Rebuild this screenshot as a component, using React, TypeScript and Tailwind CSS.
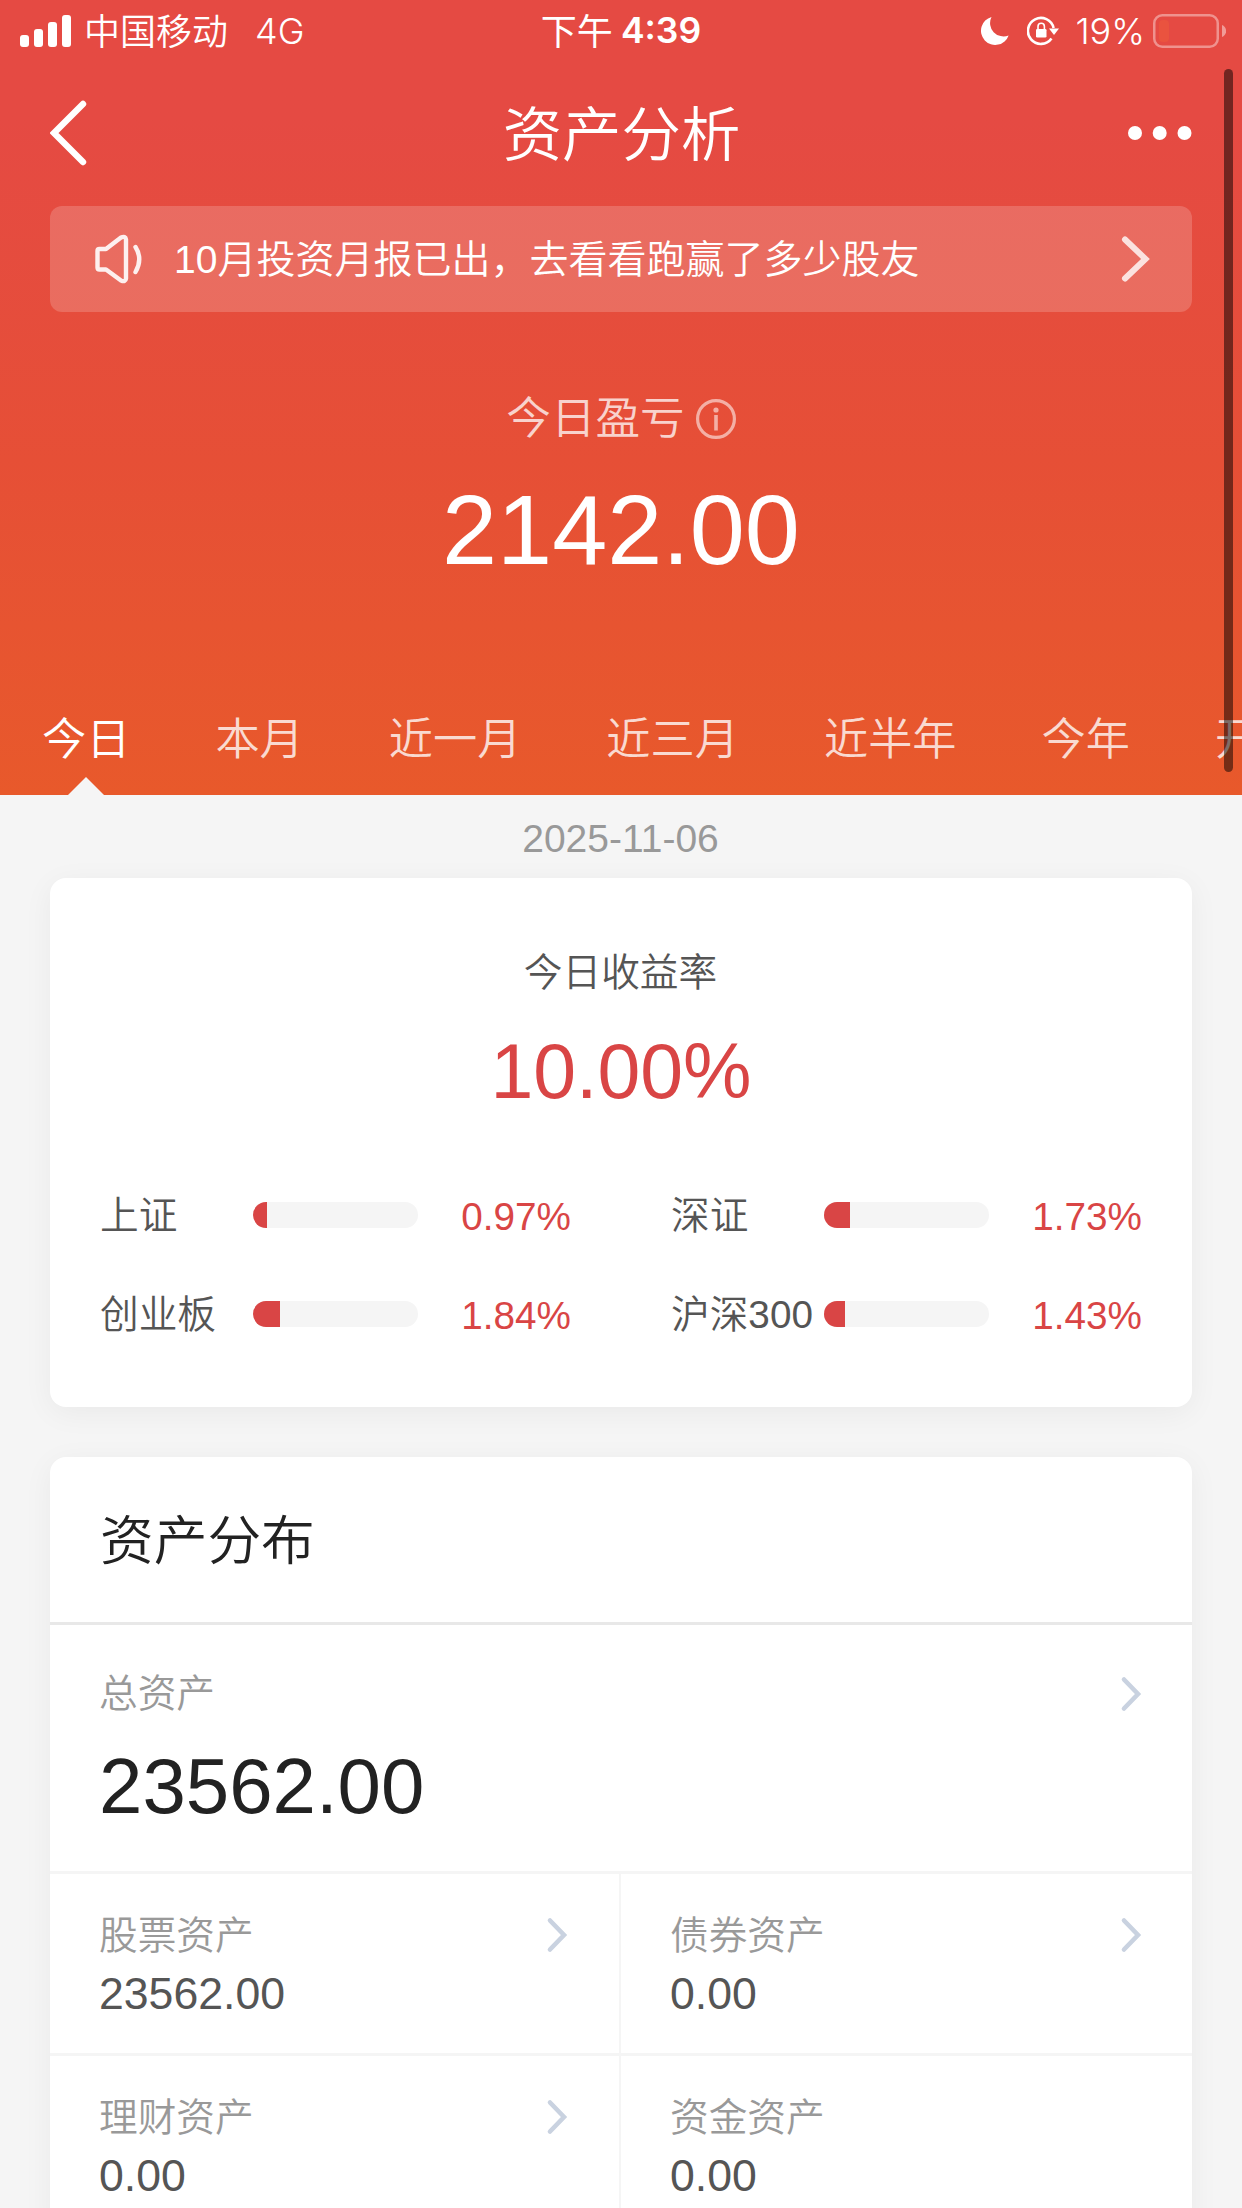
const indices = [
  { name: '上证', value: '0.97%', fill: 14 },
  { name: '深证', value: '1.73%', fill: 26 },
  { name: '创业板', value: '1.84%', fill: 27 },
  { name: '沪深300', value: '1.43%', fill: 21 },
];

const periods = ['今日', '本月', '近一月', '近三月', '近半年', '今年', '开'];

const assets = [
  { name: '股票资产', value: '23562.00', link: true },
  { name: '债券资产', value: '0.00', link: true },
  { name: '理财资产', value: '0.00', link: true },
  { name: '资金资产', value: '0.00', link: false },
];

const Chevron = ({ className }: { className: string }) => (
  <svg className={className} viewBox="0 0 22 36" fill="none" stroke="currentColor" strokeWidth="4.6" strokeLinecap="round">
    <path d="M4 3.5 L18 18 L4 32.5" />
  </svg>
);

const StatusBar = () => (
  <div className="grid h-[62px] grid-cols-3 items-center font-['Inter','Noto_Sans_CJK_SC',sans-serif] text-[36px] leading-none">
    <div className="flex items-center pl-5">
      <svg className="h-8 w-[51px]" viewBox="0 0 51 32" fill="currentColor">
        <rect x="0" y="20" width="9" height="12" rx="3" />
        <rect x="14" y="14" width="9" height="18" rx="3" />
        <rect x="28" y="7" width="9" height="25" rx="3" />
        <rect x="42" y="0" width="9" height="32" rx="3" />
      </svg>
      <span className="mt-px ml-[13px] font-[350]">中国移动</span>
      <span className="ml-[27px] font-[350]">4G</span>
    </div>
    <div className="flex items-center justify-center">
      <span className="mt-px">下午</span>
      <span className="ml-2 text-[35.5px] font-[560]">4:39</span>
    </div>
    <div className="flex items-center justify-end pr-4">
      <svg className="h-7 w-7" viewBox="0 0 28 28" fill="currentColor">
        <path d="M10.5 0 A14.2 14.2 0 1 0 27.6 18.4 A13.4 13.4 0 0 1 10.5 0 Z" />
      </svg>
      <svg className="ml-[18px] h-[30px] w-8" viewBox="0 0 32 30" fill="none" stroke="currentColor" strokeWidth="2.6">
        <path d="M26.6 12 A13 13 0 1 0 24.5 22.5" />
        <path d="M22 12.5 H32 L27 19 Z" fill="currentColor" stroke="none" />
        <rect x="9" y="13" width="10.5" height="8.5" rx="1.3" fill="currentColor" stroke="none" />
        <path d="M11 13.5 V10.5 A3.2 3.2 0 0 1 17.4 10.5 V13.5" strokeWidth="1.6" />
      </svg>
      <span className="ml-4 font-[350]">19%</span>
      <svg className="ml-2 h-[34px] w-[73px]" viewBox="0 0 73 34">
        <rect x="1.25" y="1.25" width="63.5" height="31.5" rx="8" fill="none" stroke="white" strokeOpacity=".4" strokeWidth="2.5" />
        <rect x="6" y="6" width="10" height="22" rx="4" fill="#ea533f" />
        <path d="M69 11 C74.5 13 74.5 21 69 23 Z" fill="white" fillOpacity=".45" />
      </svg>
    </div>
  </div>
);

const Header = () => (
  <header className="h-[795px] overflow-hidden bg-linear-to-b from-[#e54a43] from-15% via-[#e64f36] via-58% to-[#e8592b] text-white">
    <StatusBar />

    {/* Nav bar */}
    <div className="flex h-36 items-center justify-between px-[50px] pb-[2px]">
      <svg className="h-[66px] w-[60px]" viewBox="0 0 60 66" fill="none" stroke="currentColor" strokeWidth="6.4" strokeLinecap="round">
        <path d="M33 4 L4 33 L33 62" />
      </svg>
      <h1 className="mt-[6px] ml-[6px] text-[59.4px] leading-none font-[350]">资产分析</h1>
      <svg className="-mr-px h-4 w-[66px]" viewBox="0 0 66 16" fill="currentColor">
        <circle cx="8" cy="8" r="7" />
        <circle cx="32.7" cy="8" r="7" />
        <circle cx="57.5" cy="8" r="7" />
      </svg>
    </div>

    {/* Monthly report notice */}
    <div className="mx-[50px] flex h-[106px] items-center rounded-xl bg-white/18 pr-[42px] pl-11">
      <svg className="h-[50px] w-[50px] text-white/90" viewBox="0 0 50 50" fill="none" stroke="currentColor" strokeWidth="4.4" strokeLinecap="round" strokeLinejoin="round">
        <path d="M5.5 15 H12 L27 3.5 Q31.5 1.5 32 5.5 V44.5 Q31.5 48.5 27 46.5 L12 35.5 H5.5 Q3.5 35.5 3.5 33.5 V17 Q3.5 15 5.5 15 Z" />
        <path d="M41.5 13 Q49 25 41.5 38" />
      </svg>
      <span className="ml-[30px] flex-1 text-[39px] leading-none font-[350]">10月投资月报已出，去看看跑赢了多少股友</span>
      <svg className="h-12 w-[30px] text-white/80" viewBox="0 0 30 48" fill="none" stroke="currentColor" strokeWidth="6" strokeLinecap="round">
        <path d="M5 4.5 L25.5 24 L5 43.5" />
      </svg>
    </div>

    {/* Profit of the day */}
    <div className="mt-[84px] flex h-[45px] items-center justify-center gap-[11px]">
      <span className="mt-[2px] text-[44.6px] leading-none font-[350] text-white/75">今日盈亏</span>
      <svg className="h-10 w-10 text-white/55" viewBox="0 0 40 40" fill="none" stroke="currentColor" strokeWidth="3.2">
        <circle cx="20" cy="20" r="18.4" />
        <path d="M20 16 V31.5" strokeWidth="3.6" />
        <circle cx="20" cy="11" r="2.6" fill="currentColor" stroke="none" />
      </svg>
    </div>
    <div className="mt-[39px] text-center text-[99px] leading-[100px]">2142.00</div>

    {/* Period tabs */}
    <nav className="mt-[85px] flex h-[131px] gap-[85px] overflow-hidden pl-[42px] text-[44.2px] font-[350] whitespace-nowrap text-white/78">
      {periods.map((period, index) => (
        <div key={period} className={index === 0 ? 'flex shrink-0 flex-col items-center justify-between text-white' : 'shrink-0'}>
          <span className="mt-[53px] block leading-[44px]">{period}</span>
          {index === 0 && (
            <svg className="h-[19px] w-[38px] text-[#f5f5f5]" viewBox="0 0 38 19" fill="currentColor">
              <path d="M0 19 L19 0 L38 19 Z" />
            </svg>
          )}
        </div>
      ))}
    </nav>
  </header>
);

export default function App() {
  return (
    <div className="relative h-[2208px] w-[1242px] overflow-hidden bg-[#f5f5f5] font-['Liberation_Sans','Noto_Sans_CJK_SC',sans-serif] text-[#555]">
      <Header />

      <div className="flex h-[83px] items-center justify-center pt-[3px] pr-px text-[39px] leading-none text-[#999]">2025-11-06</div>

      {/* Yield of the day */}
      <section className="mx-[50px] h-[529px] rounded-[16px] bg-white pt-[75px] shadow-[0_6px_30px_rgba(0,0,0,0.05)]">
        <h2 className="pr-px text-center text-[38.7px] leading-[40px] font-[350]">今日收益率</h2>
        <div className="mt-[38px] text-center text-[77px] leading-[80px] text-[#d94545]">10.00%</div>
        <div className="mt-[54px] grid grid-cols-[521px_521px] gap-x-[50px] pl-[50px] text-[38.7px]">
          {indices.map((item) => (
            <div key={item.name} className="flex h-[99px] items-center">
              <span className="mt-1 w-[153px] font-[350] whitespace-nowrap">{item.name}</span>
              <div className="h-[26px] w-[165px] overflow-hidden rounded-full bg-[#f5f5f5]">
                <div className="h-full bg-[#d94545]" style={{ width: item.fill }} />
              </div>
              <span className="mt-[6px] w-[153px] text-right text-[#d94545]">{item.value}</span>
            </div>
          ))}
        </div>
      </section>

      {/* Asset distribution */}
      <section className="mx-[50px] mt-[50px] rounded-[16px] bg-white shadow-[0_6px_30px_rgba(0,0,0,0.05)]">
        <h2 className="flex h-[168px] items-center border-b-[3px] border-[#e8e8e8] pt-1 pl-[50px] text-[53.7px] leading-none font-[350] text-[#222]">资产分布</h2>
        <div className="h-[249px] border-b-[3px] border-[#f5f5f5] pt-[49px] pr-[50px] pl-[49px]">
          <div className="flex h-[40px] items-center justify-between text-[38.7px] leading-none font-[350] text-[#999]">
            总资产
            <Chevron className="h-9 w-[22px] text-[#c9d2e0]" />
          </div>
          <div className="mt-[32px] text-[78px] leading-[80px] text-[#222]">23562.00</div>
        </div>
        <div className="grid grid-cols-[571px_571px]">
          {assets.map((asset, index) => (
            <div
              key={asset.name}
              className={
                index % 2 === 0
                  ? 'h-[182px] border-r-2 border-b-[3px] border-[#f5f5f5] pt-[41px] pr-[51px] pl-[49px]'
                  : 'h-[182px] border-b-[3px] border-[#f5f5f5] pt-[41px] pr-[50px] pl-[49px]'
              }
            >
              <div className="flex h-[40px] items-center justify-between text-[38.7px] leading-none font-[350] text-[#999]">
                <span className="mt-[2px]">{asset.name}</span>
                {asset.link && <Chevron className="h-9 w-[22px] text-[#c9d2e0]" />}
              </div>
              <div className="mt-4 text-[44.6px] leading-[46px]">{asset.value}</div>
            </div>
          ))}
        </div>
      </section>

      {/* Scroll indicator */}
      <div className="absolute top-[69px] right-[9px] h-[703px] w-[9px] rounded-full bg-black/50" />
    </div>
  );
}
